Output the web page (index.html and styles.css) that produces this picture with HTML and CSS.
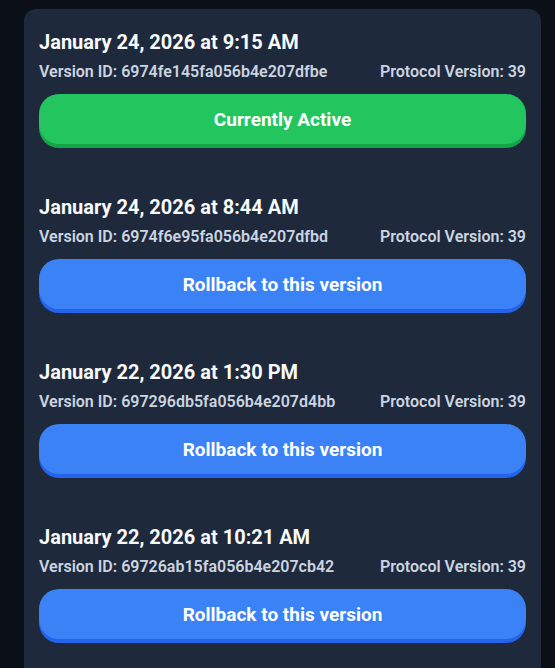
FILE: index.html
```html
<!DOCTYPE html>
<html lang="en">
<head>
    <meta charset="UTF-8">
    <title>Version History</title>
    <link rel="stylesheet" href="styles.css">
</head>
<body>
<div class="card">
    <div class="version">
        <h3 class="version-date">January 24, 2026 at 9:15 AM</h3>
        <div class="version-meta">
            <span>Version ID: 6974fe145fa056b4e207dfbe</span>
            <span>Protocol Version: 39</span>
        </div>
        <button class="btn btn-active" type="button">Currently Active</button>
    </div>
    <div class="version">
        <h3 class="version-date">January 24, 2026 at 8:44 AM</h3>
        <div class="version-meta">
            <span>Version ID: 6974f6e95fa056b4e207dfbd</span>
            <span>Protocol Version: 39</span>
        </div>
        <button class="btn btn-rollback" type="button">Rollback to this version</button>
    </div>
    <div class="version">
        <h3 class="version-date">January 22, 2026 at 1:30 PM</h3>
        <div class="version-meta">
            <span>Version ID: 697296db5fa056b4e207d4bb</span>
            <span>Protocol Version: 39</span>
        </div>
        <button class="btn btn-rollback" type="button">Rollback to this version</button>
    </div>
    <div class="version">
        <h3 class="version-date">January 22, 2026 at 10:21 AM</h3>
        <div class="version-meta">
            <span>Version ID: 69726ab15fa056b4e207cb42</span>
            <span>Protocol Version: 39</span>
        </div>
        <button class="btn btn-rollback" type="button">Rollback to this version</button>
    </div>
</div>
</body>
</html>
```

FILE: styles.css
```css
body {
    margin: 0;
    padding: 9px 14px 0 24px;
    background: #0b0f17;
    font-family: Roboto, "Liberation Sans", sans-serif;
}

.card {
    background: #1e293b;
    border-radius: 12px;
    padding: 19px 15px 40px 15px;
}

.version {
    margin-bottom: 49px;
}

.version-date {
    margin: 0;
    color: #f8fafc;
    font-size: 20px;
    line-height: 28px;
    font-weight: 700;
}

.version-meta {
    margin-top: 6px;
    display: flex;
    justify-content: space-between;
    color: #cbd5e1;
    font-size: 16px;
    line-height: 20px;
    font-weight: 600;
}

.btn {
    display: block;
    width: 100%;
    height: 50px;
    margin-top: 12px;
    border: none;
    border-radius: 20px;
    color: #ffffff;
    font-family: inherit;
    font-size: 19px;
    font-weight: 700;
}

.btn-active {
    background: #22c55e;
    box-shadow: 0 4px 0 #16a34a;
}

.btn-rollback {
    background: #3b82f6;
    box-shadow: 0 4px 0 #2563eb;
}
```
